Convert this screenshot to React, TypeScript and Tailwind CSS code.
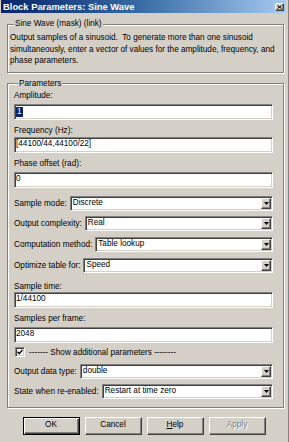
import React from 'react';

const sunken =
  'border border-t-[#808080] border-l-[#808080] border-b-white border-r-white shadow-[inset_1px_1px_0_#404040,inset_-1px_-1px_0_#d4d0c8] bg-white';
const raised =
  'border border-t-white border-l-white border-b-[#404040] border-r-[#404040] shadow-[inset_-1px_-1px_0_#808080] bg-[#d4d0c8]';
const etched = 'border border-[#808080] shadow-[inset_1px_1px_0_#fff,1px_1px_0_#fff]';

const Label = ({ children, className = '' }: { children: React.ReactNode; className?: string }) => (
  <div className={`leading-[11px] h-[11px] whitespace-nowrap ${className}`}>{children}</div>
);

const TextBox = ({ children, className = '' }: { children: React.ReactNode; className?: string }) => (
  <div className={`${sunken} h-[16px] p-[1px] flex items-center whitespace-nowrap ${className}`}>{children}</div>
);

const ArrowBtn = () => (
  <span className={`${raised} w-[10px] h-full flex items-center justify-center shrink-0`}>
    <svg width="5" height="3" viewBox="0 0 5 3">
      <path d="M0 0H5L2.5 3Z" fill="#000" />
    </svg>
  </span>
);

const SelectRow = ({ label, value, className = '' }: { label: string; value: string; className?: string }) => (
  <div className={`flex items-center gap-[3px] h-[15px] ${className}`}>
    <span className="whitespace-nowrap leading-[11px]">{label}</span>
    <div className={`${sunken} flex-1 h-full p-[1px] flex items-center`}>
      <span className="flex-1 pl-[1px] whitespace-nowrap">{value}</span>
      <ArrowBtn />
    </div>
  </div>
);

const Button = ({ children, primary, disabled }: { children: React.ReactNode; primary?: boolean; disabled?: boolean }) => (
  <button
    className={`w-[57px] h-[18px] flex items-center justify-center ${
      primary
        ? 'border border-black bg-[#d4d0c8] shadow-[inset_1px_1px_0_#fff,inset_-1px_-1px_0_#404040,inset_-2px_-2px_0_#808080]'
        : raised
    } ${disabled ? 'text-[#808080] [text-shadow:1px_1px_0_#fff]' : 'text-black'}`}
  >
    {children}
  </button>
);

export default function App() {
  return (
    <div className="w-[289px] h-[442px] bg-[#d4d0c8] text-black text-[8.2px] font-['Liberation_Sans',Arial,sans-serif] flex flex-col border-r border-r-[#808080] overflow-hidden">
      {/* title bar */}
      <div className="h-[13px] ml-[1px] mr-[2px] bg-gradient-to-r from-[#0a246a] via-[#3a6ea5] to-[#a6caf0] flex items-center justify-between pl-[2px] pr-[2px]">
        <span className="text-white font-bold text-[9.4px] leading-[13px] whitespace-nowrap">Block Parameters: Sine Wave</span>
        <span className={`${raised} w-[9px] h-[8px] flex items-center justify-center`}>
          <svg width="5" height="4" viewBox="0 0 5 4">
            <path d="M0.5 0.5L4.5 3.5M4.5 0.5L0.5 3.5" stroke="#000" strokeWidth="1" />
          </svg>
        </span>
      </div>

      {/* mask description */}
      <fieldset className={`${etched} ml-[7px] w-[277px] mt-[6px] pl-[2px] pt-[3px] pb-[5px]`}>
        <legend className="ml-[4px] px-[1px] leading-[10px] bg-[#d4d0c8]">Sine Wave (mask) (link)</legend>
        <div className="leading-[11.5px] whitespace-nowrap">
          Output samples of a sinusoid.&nbsp; To generate more than one sinusoid
          <br />
          simultaneously, enter a vector of values for the amplitude, frequency, and
          <br />
          phase parameters.
        </div>
      </fieldset>

      {/* parameters */}
      <fieldset className={`${etched} ml-[7px] w-[277px] mt-[6px] pl-[6px] pr-[10px] pb-[8px] flex flex-col`}>
        <legend className="ml-[4px] px-[1px] leading-[10px] bg-[#d4d0c8]">Parameters</legend>
        <Label className="mt-[1px]">Amplitude:</Label>
        <TextBox className="mt-[3px]">
          <span className="bg-[#0a246a] text-white px-[1px] leading-[10px]">1</span>
        </TextBox>
        <Label className="mt-[5px]">Frequency (Hz):</Label>
        <TextBox className="mt-[1px]">[44100/44,44100/22]</TextBox>
        <Label className="mt-[5px]">Phase offset (rad):</Label>
        <TextBox className="mt-[3px]">0</TextBox>

        <SelectRow className="mt-[8px]" label="Sample mode:" value="Discrete" />
        <SelectRow className="mt-[5px]" label="Output complexity:" value="Real" />
        <SelectRow className="mt-[6px]" label="Computation method:" value="Table lookup" />
        <SelectRow className="mt-[6px]" label="Optimize table for:" value="Speed" />

        <Label className="mt-[8px]">Sample time:</Label>
        <TextBox className="mt-0">1/44100</TextBox>
        <Label className="mt-[5px]">Samples per frame:</Label>
        <TextBox className="mt-[3px]">2048</TextBox>

        <div className="mt-[4px] h-[11px] flex items-center gap-[4px] pl-[1px]">
          <span className={`${sunken} w-[10px] h-[10px] flex items-center justify-center`}>
            <svg width="6" height="6" viewBox="0 0 6 6">
              <path d="M0.5 2.8L2.2 4.6L5.5 1" stroke="#000" strokeWidth="1.4" fill="none" />
            </svg>
          </span>
          <span className="whitespace-nowrap leading-[11px]">------- Show additional parameters --------</span>
        </div>

        <SelectRow className="mt-[6px]" label="Output data type:" value="double" />
        <SelectRow className="mt-[5px]" label="State when re-enabled:" value="Restart at time zero" />
      </fieldset>

      {/* buttons */}
      <div className="mt-[9px] flex justify-center gap-[5px]">
        <Button primary>OK</Button>
        <Button>Cancel</Button>
        <Button>
          <span>
            <u>H</u>elp
          </span>
        </Button>
        <Button disabled>Apply</Button>
      </div>
    </div>
  );
}
